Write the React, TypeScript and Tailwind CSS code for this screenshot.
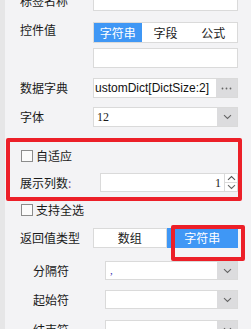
import React from "react";

const cjk = { fontFamily: '"Noto Sans CJK SC", "Microsoft YaHei", sans-serif' };

function Chevron() {
  return (
    <svg width="9" height="6" viewBox="0 0 9 6" fill="none">
      <path d="M1 1.2 L4.5 4.5 L8 1.2" stroke="#666" strokeWidth="1.1" />
    </svg>
  );
}

function Select({ children }: { children?: React.ReactNode }) {
  return (
    <div className="flex h-full w-full border border-[#dadada] bg-white">
      <div className="flex flex-1 items-center overflow-hidden">{children}</div>
      <div className="flex w-[20px] items-center justify-center bg-[#dcdcde]">
        <Chevron />
      </div>
    </div>
  );
}

function Checkbox() {
  return <div className="h-[12px] w-[12px] border border-[#8c8c8c] bg-[#fbfbfb]" />;
}

export default function App() {
  return (
    <div className="flex h-[329px] w-[251px] overflow-hidden text-[12px] text-[#1a1a1a]" style={cjk}>
      <div className="w-[5px] shrink-0 bg-[#e6e6e7]" />
      <div className="flex flex-1 flex-col bg-[#f3f3f5]">
        {/* Row 1 */}
        <div className="mt-[-9px] flex h-[20px] shrink-0 items-center pl-[15px] pr-[13px]">
          <div className="w-[73px] leading-[14px]">标签名称</div>
          <div className="h-full flex-1 border border-[#dadada] bg-white" />
        </div>
        {/* Row 2 */}
        <div className="mt-[11px] flex h-[21px] shrink-0 items-start pl-[15px] pr-[13px]">
          <div className="w-[73px] pt-[1px] leading-[14px]">控件值</div>
          <div className="flex h-full flex-1 border border-[#dadada] bg-white">
            <div className="flex flex-1 items-center justify-center bg-[#3f97f5] text-white">字符串</div>
            <div className="flex flex-1 items-center justify-center">字段</div>
            <div className="flex flex-1 items-center justify-center">公式</div>
          </div>
        </div>
        {/* Row 3 */}
        <div className="mt-[5px] flex h-[20px] shrink-0 pl-[88px] pr-[13px]">
          <div className="h-full flex-1 border border-[#dadada] bg-white" />
        </div>
        {/* Row 4 */}
        <div className="mt-[10px] flex h-[20px] shrink-0 items-center pl-[15px] pr-[13px]">
          <div className="w-[73px] leading-[14px]">数据字典</div>
          <div className="flex h-full flex-1 border border-[#dadada] bg-white">
            <div
              className="flex flex-1 items-center overflow-hidden whitespace-nowrap pl-[1px] text-[12px] text-[#111]"
              style={{ fontFamily: '"Liberation Sans", Arial, sans-serif' }}
            >
              ustomDict[DictSize:2]
            </div>
            <div className="flex w-[21px] items-center justify-center bg-[#dcdcde]">
              <svg width="11" height="3" viewBox="0 0 11 3">
                <circle cx="1.5" cy="1.5" r="0.9" fill="#666" />
                <circle cx="5.5" cy="1.5" r="0.9" fill="#666" />
                <circle cx="9.5" cy="1.5" r="0.9" fill="#666" />
              </svg>
            </div>
          </div>
        </div>
        {/* Row 5 */}
        <div className="mt-[9px] flex h-[20px] shrink-0 items-center pl-[15px] pr-[13px]">
          <div className="w-[73px] leading-[14px]">字体</div>
          <div className="h-full flex-1">
            <Select>
              <span className="pl-[3px] text-[12px]" style={{ fontFamily: '"Liberation Serif", serif' }}>
                12
              </span>
            </Select>
          </div>
        </div>
        {/* Red highlighted group */}
        <div className="ml-[1px] mr-[9px] mt-[11px] flex h-[63px] shrink-0 flex-col rounded-[2px] border-4 border-[#ec1f28] pl-[10px] pt-[7px]">
          <div className="flex h-[13px] shrink-0 items-center">
            <div className="ml-[1px] mr-[3px]">
              <Checkbox />
            </div>
            <span className="leading-[14px]">自适应</span>
          </div>
          <div className="mt-[11px] flex h-[19px] shrink-0 items-center">
            <div className="w-[80px] leading-[14px]">
              展示列数<span className="text-[#7a4a8a]">:</span>
            </div>
            <div className="flex h-full flex-1 border border-[#dadada] bg-white">
              <div
                className="flex flex-1 items-center justify-end pr-[3px] text-[12px]"
                style={{ fontFamily: '"Liberation Serif", serif' }}
              >
                1
              </div>
              <div className="flex w-[13px] flex-col border-l border-[#dadada]">
                <div className="flex flex-1 items-center justify-center">
                  <svg width="9" height="6" viewBox="0 0 9 6" fill="none">
                    <path d="M1 4.8 L4.5 1.5 L8 4.8" stroke="#555" strokeWidth="1.1" />
                  </svg>
                </div>
                <div className="flex flex-1 items-center justify-center border-t border-[#dadada]">
                  <Chevron />
                </div>
              </div>
            </div>
          </div>
        </div>
        {/* 支持全选 */}
        <div className="mt-[2px] flex h-[14px] shrink-0 items-center pl-[16px]">
          <div className="mr-[3px]">
            <Checkbox />
          </div>
          <span className="leading-[14px]">支持全选</span>
        </div>
        {/* 返回值类型 */}
        <div className="mt-[11px] flex h-[20px] shrink-0 items-center pl-[15px] pr-[13px]">
          <div className="w-[73px] leading-[14px]">返回值类型</div>
          <div className="relative flex h-full flex-1">
            <div className="flex flex-1 items-center justify-center border border-[#dadada] bg-white">数组</div>
            <div className="flex flex-1 items-center justify-center bg-[#3f97f5] text-white">字符串</div>
            <div className="absolute left-[78px] top-[-3px] h-[36px] w-[74px] rounded-[2px] border-4 border-[#ec1f28]" />
          </div>
        </div>
        {/* 分隔符 */}
        <div className="mt-[13px] flex h-[19px] shrink-0 items-center pl-[28px] pr-[13px]">
          <div className="w-[72px] leading-[14px]">分隔符</div>
          <div className="h-full flex-1">
            <Select>
              <span className="pl-[4px] text-[11px] text-[#2b2bb0]" style={{ fontFamily: '"Liberation Serif", serif' }}>
                ,
              </span>
            </Select>
          </div>
        </div>
        {/* 起始符 */}
        <div className="mt-[10px] flex h-[19px] shrink-0 items-center pl-[28px] pr-[13px]">
          <div className="w-[72px] leading-[14px]">起始符</div>
          <div className="h-full flex-1">
            <Select />
          </div>
        </div>
        {/* 结束符 */}
        <div className="mt-[11px] flex h-[19px] shrink-0 items-center pl-[28px] pr-[13px]">
          <div className="w-[72px] leading-[14px]">结束符</div>
          <div className="h-full flex-1">
            <Select />
          </div>
        </div>
      </div>
    </div>
  );
}
